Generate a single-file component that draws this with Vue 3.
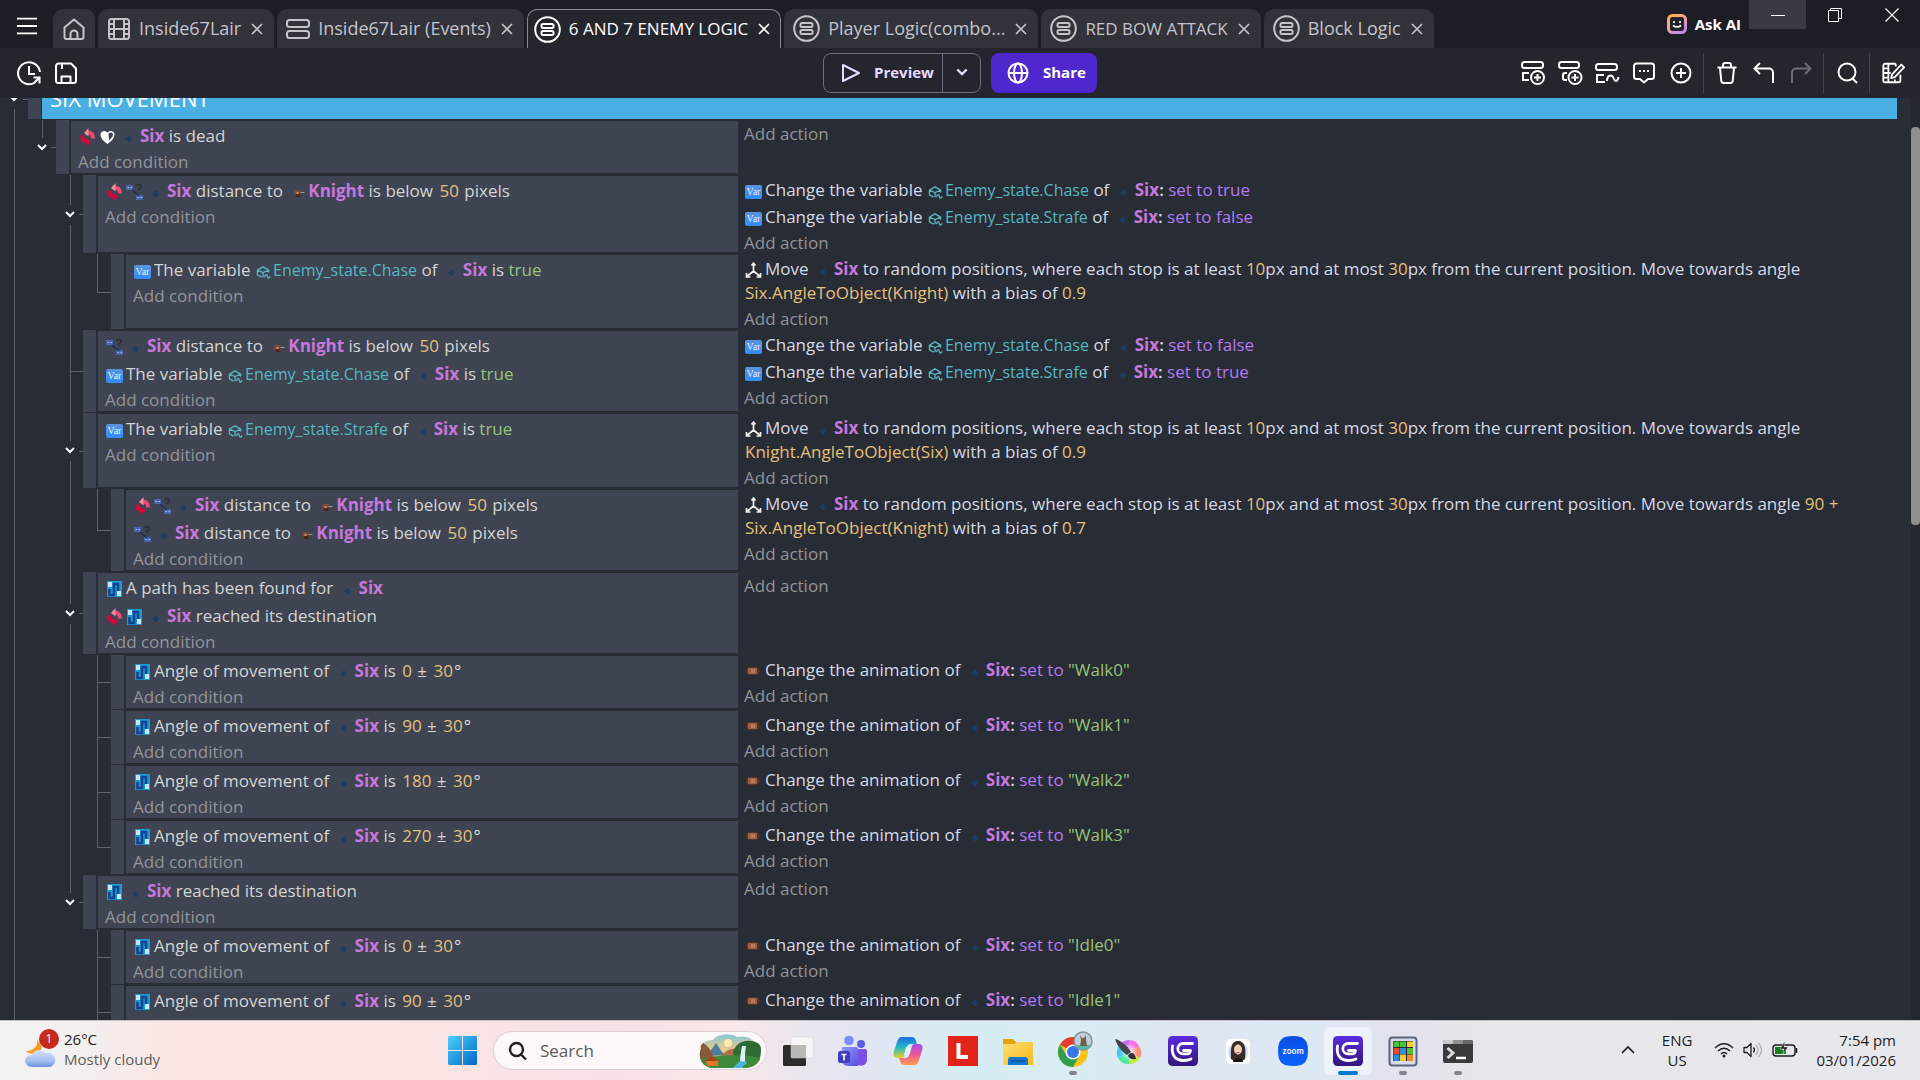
<script setup>
const text = (value) => ({ kind: 'text', value })
const num = (value) => ({ kind: 'num', value })
const bool = (value) => ({ kind: 'bool', value })
const oper = (value) => ({ kind: 'oper', value })
const icon = (name) => ({ kind: 'icon', name })
const variable = (value) => ({ kind: 'variable', value })
const six = { kind: 'object', name: 'six', value: 'Six' }
const knight = { kind: 'object', name: 'knight', value: 'Knight' }

const distance = (inverted) => [
  ...(inverted ? [icon('invert')] : []),
  icon('distance'), six, text(' distance to '), knight, text(' is below '), num('50'), text(' pixels'),
]
const variableIsTrue = (name) => [
  icon('var'), text('The variable '), variable(name), text(' of '), six, text(' is '), bool('true'),
]
const setVariable = (name, value) => [
  icon('var'), text('Change the variable '), variable(name), text(' of '), six,
  { kind: 'colon', value: ': ' }, oper('set to ' + value),
]
const move = (angle, bias) => [
  icon('move'), text('Move '), six, text(' to random positions, where each stop is at least '), num('10'),
  text('px and at most '), num('30'), text('px from the current position. Move towards angle '),
  ...angle.map(num), text(' with a bias of '), num(bias),
]
const angleIs = (angle) => [
  icon('path'), text('Angle of movement of '), six, text(' is '), num(angle), text(' ± '), num('30'), text('°'),
]
const animate = (name) => [
  icon('anim'), text('Change the animation of '), six, { kind: 'colon', value: ': ' },
  oper('set to '), { kind: 'str', value: `"${name}"` },
]

const events = [
  { guides: ['line', 'fold-end'], conditions: [[icon('invert'), icon('heart'), six, text(' is dead')]], actions: [] },
  {
    guides: ['line', '', 'fold'],
    conditions: [distance(true)],
    actions: [setVariable('Enemy_state.Chase', 'true'), setVariable('Enemy_state.Strafe', 'false')],
  },
  {
    guides: ['line', '', 'line', 'end'],
    conditions: [variableIsTrue('Enemy_state.Chase')],
    actions: [move(['Six.AngleToObject(Knight)'], '0.9')],
  },
  {
    guides: ['line', '', 'tee'],
    conditions: [distance(false), variableIsTrue('Enemy_state.Chase')],
    actions: [setVariable('Enemy_state.Chase', 'false'), setVariable('Enemy_state.Strafe', 'true')],
  },
  {
    guides: ['line', '', 'fold'],
    conditions: [variableIsTrue('Enemy_state.Strafe')],
    actions: [move(['Knight.AngleToObject(Six)'], '0.9')],
  },
  {
    guides: ['line', '', 'line', 'end'],
    conditions: [distance(true), distance(false)],
    actions: [move(['90 + ', 'Six.AngleToObject(Knight)'], '0.7')],
  },
  {
    guides: ['line', '', 'fold'],
    conditions: [
      [icon('path'), text('A path has been found for '), six],
      [icon('invert'), icon('path'), six, text(' reached its destination')],
    ],
    actions: [],
  },
  { guides: ['line', '', 'line', 'tee'], conditions: [angleIs('0')], actions: [animate('Walk0')] },
  { guides: ['line', '', 'line', 'tee'], conditions: [angleIs('90')], actions: [animate('Walk1')] },
  { guides: ['line', '', 'line', 'tee'], conditions: [angleIs('180')], actions: [animate('Walk2')] },
  { guides: ['line', '', 'line', 'end'], conditions: [angleIs('270')], actions: [animate('Walk3')] },
  {
    guides: ['line', '', 'fold-end'],
    conditions: [[icon('path'), six, text(' reached its destination')]],
    actions: [],
  },
  { guides: ['line', '', '', 'tee'], conditions: [angleIs('0')], actions: [animate('Idle0')] },
  { guides: ['line', '', '', 'tee'], conditions: [angleIs('90')], actions: [animate('Idle1')] },
]

const tabs = [
  { icon: 'film', label: 'Inside67Lair' },
  { icon: 'sheet', label: 'Inside67Lair (Events)' },
  { icon: 'external', label: '6 AND 7 ENEMY LOGIC', active: true, caps: true },
  { icon: 'external', label: 'Player Logic(combo...' },
  { icon: 'external', label: 'RED BOW ATTACK', caps: true },
  { icon: 'external', label: 'Block Logic' },
]

const tools = [
  [
    { id: 'add-event', label: 'Add an event' },
    { id: 'add-sub', label: 'Add a sub-event' },
    { id: 'add-other', label: 'Add another event' },
    { id: 'comment', label: 'Add a comment' },
    { id: 'plus', label: 'Choose and add an event' },
  ],
  [
    { id: 'trash', label: 'Delete' },
    { id: 'undo', label: 'Undo' },
    { id: 'redo', label: 'Redo', disabled: true },
  ],
  [{ id: 'search', label: 'Search in events' }],
  [{ id: 'edit-scene', label: 'Open settings' }],
]

const apps = [
  { id: 'taskview', label: 'Task view' },
  { id: 'teams', label: 'Teams' },
  { id: 'copilot', label: 'Copilot' },
  { id: 'lapp', label: 'L' },
  { id: 'folder', label: 'File Explorer' },
  { id: 'chrome', label: 'Chrome', running: true },
  { id: 'krita', label: 'Krita' },
  { id: 'gdevelop', label: 'GDevelop' },
  { id: 'avatar', label: 'Avatar' },
  { id: 'zoomapp', label: 'Zoom' },
  { id: 'gdevelop', label: 'GDevelop 5', active: true },
  { id: 'cube', label: 'Cube', running: true },
  { id: 'terminal', label: 'Terminal', running: true },
]
</script>

<template>
  <svg class="sprite" aria-hidden="true">
    <defs>
      <linearGradient id="g-win" x1="0" y1="0" x2="1" y2="1"><stop offset="0" stop-color="#4cd0ff" /><stop offset="1" stop-color="#0068c8" /></linearGradient>
      <linearGradient id="g-gd" x1="0" y1="0" x2="0" y2="1"><stop offset="0" stop-color="#5a2ce0" /><stop offset="1" stop-color="#34167c" /></linearGradient>
      <linearGradient id="g-ai" x1="0" y1="0" x2=".6" y2="1"><stop offset="0" stop-color="#ffb04a" /><stop offset=".5" stop-color="#f5a58c" /><stop offset="1" stop-color="#c08cf0" /></linearGradient>
      <linearGradient id="g-folder" x1="0" y1="0" x2="1" y2="1"><stop offset="0" stop-color="#ffdf70" /><stop offset="1" stop-color="#f9b91e" /></linearGradient>
      <linearGradient id="g-cloud" x1="0" y1="0" x2="0" y2="1"><stop offset="0" stop-color="#cfe0fb" /><stop offset=".6" stop-color="#a9c3f2" /><stop offset="1" stop-color="#6d93e0" /></linearGradient>
      <linearGradient id="g-zoom" x1="0" y1="0" x2="0" y2="1"><stop offset="0" stop-color="#0a4ee0" /><stop offset="1" stop-color="#0b63ff" /></linearGradient>
      <linearGradient id="g-teams" x1="0" y1="0" x2="1" y2="1"><stop offset="0" stop-color="#8f9cf8" /><stop offset="1" stop-color="#5a4ee0" /></linearGradient>
      <linearGradient id="g-cop1" x1="0" y1="0" x2="0" y2="1"><stop offset="0" stop-color="#1b6fe0" /><stop offset=".5" stop-color="#25b8c8" /><stop offset="1" stop-color="#e8d02a" /></linearGradient>
      <linearGradient id="g-cop2" x1="0" y1="0" x2="0" y2="1"><stop offset="0" stop-color="#a04ee8" /><stop offset=".5" stop-color="#ec5a9a" /><stop offset="1" stop-color="#ff9a4a" /></linearGradient>
      <linearGradient id="g-sky" x1="0" y1="0" x2="0" y2="1"><stop offset="0" stop-color="#7fc8d8" /><stop offset=".5" stop-color="#f6c98a" /><stop offset="1" stop-color="#3f7a30" /></linearGradient>
      <radialGradient id="g-center"><stop offset="0" stop-color="#fff" /><stop offset="1" stop-color="#fff" stop-opacity="0" /></radialGradient>
    </defs>

    <symbol id="menu" viewBox="0 0 24 24"><path d="M1 4h22M1 12h22M1 20h22" stroke="currentColor" stroke-width="2" /></symbol>
    <symbol id="home" viewBox="0 0 24 24"><path d="M2.500 10.500 12 2.500l9.500 8V20a2 2 0 0 1-2 2H4.500a2 2 0 0 1-2-2zM8.500 22v-5a3.500 3.500 0 0 1 7 0v5" fill="none" stroke="currentColor" stroke-width="2" stroke-linejoin="round" /></symbol>
    <symbol id="film" viewBox="0 0 24 24"><g fill="none" stroke="currentColor" stroke-width="2"><rect x="2" y="2" width="20" height="20" rx="2.500" /><path d="M7 2v20M17 2v20M7 12h10M2 7h5M2 12h5M2 17h5M17 7h5M17 12h5M17 17h5" /></g></symbol>
    <symbol id="sheet" viewBox="0 0 24 24"><g fill="none" stroke="currentColor" stroke-width="2"><rect x="1" y="3" width="22" height="7" rx="2.500" /><rect x="1" y="14" width="22" height="7" rx="2.500" /></g></symbol>
    <symbol id="external" viewBox="0 0 27 27"><g fill="none" stroke="currentColor" stroke-width="2"><circle cx="13.500" cy="13.500" r="12.300" /><rect x="7.500" y="8" width="12" height="4" rx="1.500" /><rect x="7.500" y="15" width="12" height="4" rx="1.500" /></g></symbol>
    <symbol id="close" viewBox="0 0 12 12"><path d="m1 1 10 10M11 1 1 11" stroke="currentColor" stroke-width="1.600" /></symbol>
    <symbol id="history" viewBox="0 0 26 26"><path d="M19 22.500A11 11 0 1 1 24 12M13 6v8h6M17.500 17.500h6v6M23.500 17.500l-5 5" fill="none" stroke="currentColor" stroke-width="2" /></symbol>
    <symbol id="save" viewBox="0 0 24 24"><path d="M4.500 2.500H17l5 5V19.500a2.500 2.500 0 0 1-2.500 2.500h-15A2.500 2.500 0 0 1 2 19.500V5a2.500 2.500 0 0 1 2.500-2.500zM8 3v5M7.500 22v-6.500h9V22" fill="none" stroke="currentColor" stroke-width="2" stroke-linejoin="round" /></symbol>
    <symbol id="play" viewBox="0 0 20 20"><path d="M2 2l16 8-16 8z" fill="none" stroke="currentColor" stroke-width="2" stroke-linejoin="round" /></symbol>
    <symbol id="chevron" viewBox="0 0 12 12"><path d="m2 3 4 4 4-4" fill="none" stroke="currentColor" stroke-width="2" /></symbol>
    <symbol id="globe" viewBox="0 0 22 22"><g fill="none" stroke="currentColor" stroke-width="2"><circle cx="11" cy="11" r="9.500" /><ellipse cx="11" cy="11" rx="4" ry="9.500" /><path d="M1.500 11h19" /></g></symbol>
    <symbol id="add-event" viewBox="0 0 26 26"><g fill="none" stroke="currentColor" stroke-width="2"><rect x="2" y="2" width="21" height="6" rx="2.500" /><path d="M9 13H3v7h6" /><circle cx="17.500" cy="17.500" r="6.500" /><path d="M17.500 14v7M14 17.500h7" /></g></symbol>
    <symbol id="add-sub" viewBox="0 0 26 26"><g fill="none" stroke="currentColor" stroke-width="2"><rect x="2" y="2" width="20" height="6" rx="2.500" /><path d="M10 13H8a2 2 0 0 0-2 2v3a2 2 0 0 0 2 2h2" /><circle cx="18" cy="17.500" r="6.500" /><path d="M18 14v7M14.500 17.500h7" /></g></symbol>
    <symbol id="add-other" viewBox="0 0 26 26"><g fill="none" stroke="currentColor" stroke-width="2"><rect x="2" y="4" width="21" height="6" rx="2.500" /><path d="M10 15H3v7h8M13 21c0-6 5-7 6.500-3s4 4 5-1" /></g></symbol>
    <symbol id="comment" viewBox="0 0 24 24"><path d="M4.500 2.500h15A2.500 2.500 0 0 1 22 5v10.500a2.500 2.500 0 0 1-2.500 2.500H16l-4 3.500L8 18H4.500A2.500 2.500 0 0 1 2 15.500V5a2.500 2.500 0 0 1 2.500-2.500z" fill="none" stroke="currentColor" stroke-width="2" stroke-linejoin="round" /><path d="M7 9h2v2H7zM11 9h2v2h-2zM15 9h2v2h-2z" fill="currentColor" /></symbol>
    <symbol id="plus" viewBox="0 0 24 24"><g fill="none" stroke="currentColor" stroke-width="2"><circle cx="12" cy="12" r="9.500" /><path d="M12 7v10M7 12h10" /></g></symbol>
    <symbol id="trash" viewBox="0 0 24 24"><path d="M2.500 6.500h19M8 6V4a2 2 0 0 1 2-2h4a2 2 0 0 1 2 2v2M5 7l1.300 13a2.500 2.500 0 0 0 2.500 2h6.400a2.500 2.500 0 0 0 2.500-2L19 7" fill="none" stroke="currentColor" stroke-width="2" /></symbol>
    <symbol id="undo" viewBox="0 0 24 24"><path d="M8 2 2.500 7.500 8 13M2.500 7.500H17a4 4 0 0 1 4 4V22" fill="none" stroke="currentColor" stroke-width="2" /></symbol>
    <symbol id="redo" viewBox="0 0 24 24"><path d="m16 2 5.500 5.500L16 13M21.500 7.500H7a4 4 0 0 0-4 4V22" fill="none" stroke="currentColor" stroke-width="2" /></symbol>
    <symbol id="search" viewBox="0 0 24 24"><path d="M20.500 11a8.500 8.500 0 1 1-17 0 8.500 8.500 0 0 1 17 0zM17.500 17.500 22 22" fill="none" stroke="currentColor" stroke-width="2" /></symbol>
    <symbol id="edit-scene" viewBox="0 0 26 26"><path d="M16 3H4.500A2 2 0 0 0 2.500 5v16a2 2 0 0 0 2 2H19a2 2 0 0 0 2-2v-6M8 3v20M2.500 8H8M2.500 13h8M2.500 18H8M15 23v-3M16 3v3M22 4l3 3L15 17.500l-4 1 1-4z" fill="none" stroke="currentColor" stroke-width="2" stroke-linejoin="round" /></symbol>
    <symbol id="ask" viewBox="0 0 20 20"><rect x="1.500" y="1.500" width="17" height="17" rx="4" fill="#23232c" stroke="url(#g-ai)" stroke-width="3" /><path d="M7 7v2M13 7v2M6 11.500q4 3 8 0" fill="none" stroke="#fff" stroke-width="1.600" /></symbol>
    <symbol id="minimize" viewBox="0 0 14 14"><path d="M0 7.500h14" stroke="currentColor" /></symbol>
    <symbol id="restore" viewBox="0 0 14 14"><path d="M.5 2.500h10v11H.5zM2.500 2.500v-2h11v10h-3" fill="none" stroke="currentColor" /></symbol>
    <symbol id="quit" viewBox="0 0 14 14"><path d="m.5.5 13 13M13.500.5l-13 13" stroke="currentColor" stroke-width="1.200" /></symbol>

    <symbol id="invert" viewBox="0 0 17 18"><path d="M8 4.500c4 0 6 1.500 6 6" fill="none" stroke="#ec4a70" stroke-width="4" /><path d="M9.500 0v8.500L5 5z" fill="#f58a9c" /><path d="M9 13.500c-4 0-6-1.500-6-6" fill="none" stroke="#cc0a3c" stroke-width="4" /><path d="M7.500 18V9.500L12 13.500z" fill="#d4063c" /></symbol>
    <symbol id="heart" viewBox="0 0 17 18"><path d="M8.500 16C3 12 1.500 9 1.500 6.500 1.500 3 6 1.500 8.500 4.500c2.500-3 7-1.500 7 2C15.500 9 14 12 8.500 16z" fill="#fff" /><path d="M9.500 5.500c2-2 4.500-1 4.500 1 0 2-2 4-4 6z" fill="#3e4451" /></symbol>
    <symbol id="distance" viewBox="0 0 17 18"><path d="M0 2h7v5H0zM10 12h7v5h-7z" fill="#4c66ac" /><path d="M1.500 4.500h1.500M4.500 4.500H6M11.500 14.500h1.500M14.500 14.500H16" stroke="#a9bbe8" /><path d="m6 7 7 6" stroke="#1c2f5e" stroke-width="1.500" /><path d="M10.500 3.500c1-3 4.500-2 4.500 0 0 2-2.500 1.500-2.500 4" fill="none" stroke="#2c303a" stroke-width="2" /></symbol>
    <symbol id="path" viewBox="0 0 17 18"><path d="M1 1h15v16H1z" fill="#1c9ad6" /><path d="M3.500 9v6H8V4h4v7" fill="none" stroke="#16418f" stroke-width="2.500" /><path d="M2 2h4v5H2zM11 11h4v5h-4z" fill="#bfe8fa" /></symbol>
    <symbol id="anim" viewBox="0 0 17 18"><path d="M1 9q0-3 3-4h7q3 1 4 4-1 3-4 4H4Q1 12 1 9z" fill="#5b3326" /><path d="M3 6h9v6H3z" fill="#9a5f45" /><path d="M6 7h4v4H6z" fill="#b87a5c" /></symbol>
    <symbol id="move" viewBox="0 0 17 18"><path d="M8.500 3v7M8.500 10l-6 5M8.500 10l6 5M6.500 4.500l2-2.500 2 2.500M1.500 12v4h4M15.500 12v4h-4" fill="none" stroke="#f2f2ee" stroke-width="1.700" /></symbol>
    <symbol id="six" viewBox="0 0 18 18"><path d="M8 8h3v6H8zM6 10h6v2H6z" fill="#1a3d66" /></symbol>
    <symbol id="knight" viewBox="0 0 18 18"><path d="M7 7h6v6H7z" fill="#7c4a34" /><path d="M8 11h5v3H8z" fill="#4b2620" /><path d="M9 9h2v2H9z" fill="#e08a50" /><path d="M13 9h4v1h-4z" fill="#9a9a9a" /></symbol>
    <symbol id="struct" viewBox="0 0 16 16"><path d="M13.500 8V5.500L7.500 2 1.500 5.500v5L6 13M1.500 5.500 7.500 8l6-2.500M7.500 8v5M9 13c1-4 3-3 3-1s2 3 3 0" fill="none" stroke="#56b6c2" stroke-width="1.400" /></symbol>

    <symbol id="windows" viewBox="0 0 29 29"><path d="M0 1.500C0 .7.700 0 1.500 0H14v14H0zM15 0h12.500c.8 0 1.500.7 1.500 1.500V14H15zM0 15h14v14H1.500C.7 29 0 28.300 0 27.500zM15 15h14v12.500c0 .8-.7 1.500-1.500 1.500H15z" fill="url(#g-win)" /></symbol>
    <symbol id="lens" viewBox="0 0 20 20"><path d="M15 8.500a6.500 6.500 0 1 1-13 0 6.500 6.500 0 0 1 13 0zM13 13.500l5 5" fill="none" stroke="#1d1d1d" stroke-width="2.400" /></symbol>
    <symbol id="landscape" viewBox="0 0 62 34">
      <clipPath id="c-land"><path d="M2 14C0 10 8 6 14 6 18 0 32-1 38 3c10-2 14 2 18 5 8 2 6 10 5 16-1 6-8 10-16 10H14C4 34-2 24 2 14z" /></clipPath>
      <g clip-path="url(#c-land)"><path d="M0 0h62v34H0z" fill="url(#g-sky)" /><circle cx="29" cy="9" r="4" fill="#ffe9a8" /><path d="M8 22 17 9l8 12z" fill="#4a7f9c" /><path d="M22 24c2-8 14-12 20-8v10z" fill="#b0714a" /><path d="M34 18c4-12 16-14 28-8v16H36z" fill="#2f6b34" /><path d="M0 6c6 4 12 8 14 16L0 28z" fill="#8a5a3c" /><path d="M0 26c16-6 44-6 62-2v10H0z" fill="#3f8a3a" /><path d="M43 12c-1 6-2 10-2 16l5 1c0-6 0-12 1-17z" fill="#d8f2f8" /><path d="M34 34c4-4 4-6 8-7l6 1c0 3-6 4-4 6z" fill="#49b6d8" /><path d="m7 27 6-4 6 4v5H8z" fill="#e0762c" /><path d="M5 27l8-5 7 5z" fill="#a8401c" /></g>
    </symbol>
    <symbol id="taskview" viewBox="0 0 32 32"><rect x="1" y="10" width="23" height="21" rx="1.500" fill="#2c2c2a" /><rect x="9" y="2" width="22" height="21" rx="1.500" fill="#f6f6f6" stroke="#d0d0d4" stroke-width=".5" /><path d="M9 10h15v13H9z" fill="#b9b9b7" /></symbol>
    <symbol id="teams" viewBox="0 0 32 32"><circle cx="12" cy="5.500" r="4.800" fill="#7d8cf2" /><circle cx="24" cy="9" r="4" fill="#5b60e0" /><path d="M17 14h11a2 2 0 0 1 2 2v9a6 6 0 0 1-9 5z" fill="#7a4fe8" /><path d="M5 12h14a2 2 0 0 1 2 2v17H12a7 7 0 0 1-8-7z" fill="url(#g-teams)" /><rect x="1" y="16" width="12" height="12" rx="2.500" fill="#3c3fc0" /><path d="M4.500 19.500h5M7 19.500v6" stroke="#fff" stroke-width="1.600" /></symbol>
    <symbol id="copilot" viewBox="0 0 32 32"><path d="M10 2h10c2 0 3 1 4 4l1 3h-6c-3 0-4 2-5 5l-2 7c-1 2-2 2-4 2H5c-4 0-4-4-3-7l3-9c1-3 2-5 5-5z" fill="url(#g-cop1)" /><path d="M22 30H12c-2 0-3-1-4-4l-1-3h6c3 0 4-2 5-5l2-7c1-2 2-2 4-2h3c4 0 4 4 3 7l-3 9c-1 3-2 5-5 5z" fill="url(#g-cop2)" /><path d="M14 12h5l-2 8h-5z" fill="#e8f2f6" /></symbol>
    <symbol id="lapp" viewBox="0 0 32 32"><path d="M1 1h30v30H1z" fill="#e2231a" /><path d="M11.500 8v14H21" fill="none" stroke="#fff" stroke-width="4" /></symbol>
    <symbol id="folder" viewBox="0 0 32 32"><path d="M1 4h10l3 3h17v8H1z" fill="#e3a20c" /><path d="M1 9h11l3-2h16v22a1 1 0 0 1-1 1H2a1 1 0 0 1-1-1z" fill="url(#g-folder)" /><path d="M6 30v-5a3 3 0 0 1 3-3h14a3 3 0 0 1 3 3v5z" fill="#1478d0" /><path d="M9 26h14" stroke="#0b4d96" stroke-width="1.500" /></symbol>
    <symbol id="chrome" viewBox="0 0 40 40"><circle cx="20" cy="21" r="15" fill="#fcc31e" /><path d="M20 21 7 13.500A15 15 0 0 1 33 13.500H20z" fill="#e33b2e" /><path d="M7 13.500A15 15 0 0 0 20 36l6.500-11.500L20 21l-6.500 3.500z" fill="#2f9e4f" /><circle cx="20" cy="21" r="7.500" fill="#fff" /><circle cx="20" cy="21" r="6" fill="#3478ea" /><circle cx="30" cy="10" r="9" fill="#c3cdd6" stroke="#84939c" stroke-width="1.500" /><path d="M22.500 14a8.500 8.500 0 0 0 15 0z" fill="#5bb8a8" /><path d="M27 4l2 3h2l2-3v5l1 6h-7l1-6z" fill="#6f6052" /></symbol>
    <symbol id="krita" viewBox="0 0 32 32">
      <path d="M17 17V5a12 12 0 0 1 10 6z" fill="#ff6ae0" /><path d="M17 17l10-6a12 12 0 0 1 1 12z" fill="#ff8f7a" /><path d="M17 17l11 6a12 12 0 0 1-11 6z" fill="#c4e84a" /><path d="M17 17v12a12 12 0 0 1-11-6z" fill="#4ae89a" /><path d="M17 17 6 23a12 12 0 0 1 1-12z" fill="#42c6f4" /><path d="M17 17 7 11a12 12 0 0 1 10-6z" fill="#c46cf8" />
      <circle cx="17" cy="17" r="9" fill="url(#g-center)" /><path d="M3 4c5 1 13 7 16 13l-4 3C9 16 5 10 3 4z" fill="#46464a" /><path d="M17 19c3-2 6-1 7 5-4 1-7-1-8-3z" fill="#2e2e32" />
    </symbol>
    <symbol id="gdevelop" viewBox="0 0 32 32"><rect x="1" y="1" width="30" height="30" rx="4.500" fill="url(#g-gd)" /><path d="M25.500 8.500H16a5.200 5.200 0 0 0 0 10.400h4.500c2 0 2.500-.9 3-3.400H16.500M5.500 11c-1.500 9 3 14.500 11 14.500 3 0 5.500-.5 7.500-1.500" fill="none" stroke="#fff" stroke-width="2.800" stroke-linecap="round" stroke-linejoin="round" /></symbol>
    <symbol id="avatar" viewBox="0 0 32 32"><rect x="4" y="4" width="24" height="25" rx="5" fill="#fff" /><circle cx="16" cy="17" r="10" fill="#c9def5" /><path d="M9 24c0-8-1-18 7-18s8 10 7 18l-3 2h-8z" fill="#3b2a26" /><ellipse cx="16" cy="14.500" rx="4" ry="5" fill="#f2cdb8" /><path d="M11 27c0-5 10-5 10 0z" fill="#16161a" /><path d="M14.500 17.500h3" stroke="#c0424a" /></symbol>
    <symbol id="zoomapp" viewBox="0 0 32 32"><path d="M16 1c11 0 15 4 15 15s-4 15-15 15S1 27 1 16 5 1 16 1z" fill="url(#g-zoom)" /></symbol>
    <symbol id="cube" viewBox="0 0 32 32"><rect x="2.500" y="2.500" width="27" height="28" rx="3" fill="#d6dbe8" stroke="#5b6478" stroke-width="2" /><path d="M6 6h20v20H6z" fill="#2c2a30" /><path d="M6.500 6.500h6V12h-6zM13 6.500h6V12h-6zM20 13h6v6h-6z" fill="#46c33a" /><path d="M20 6.500h6V12h-6zM13 19.500h6V26h-6z" fill="#f6c935" /><path d="M6.500 13h6v6h-6z" fill="#ef4a24" /><path d="M13 13h6v6h-6zM6.500 19.500h6V26h-6z" fill="#2f8de4" /><path d="M20 19.500h6V26h-6z" fill="#f08a28" /></symbol>
    <symbol id="terminal" viewBox="0 0 32 32"><rect x="1" y="5" width="30" height="23" rx="2" fill="#3a3a3a" /><path d="M1 9V7a2 2 0 0 1 2-2h8v4z" fill="#c9c9c9" /><path d="M11 5h10v4H11z" fill="#8f8f8f" /><path d="M21 5h8a2 2 0 0 1 2 2v2H21z" fill="#666" /><path d="m5.500 13 5.500 5-5.500 5" fill="none" stroke="#ddd" stroke-width="3" /><path d="M14 23h10" stroke="#fff" stroke-width="2.500" /></symbol>
    <symbol id="weather" viewBox="0 0 36 36"><path d="M15 8c2 6-3 12-11 12 4 5 14 3 16-4z" fill="#f2a01c" /><path d="M10 36a7 6 0 0 1 0-12 8 7 0 0 1 14-2 7 7 0 0 1 4 14z" fill="url(#g-cloud)" /></symbol>
    <symbol id="up" viewBox="0 0 16 16"><path d="m2 11 6-6 6 6" fill="none" stroke="#1d1d1d" stroke-width="1.700" /></symbol>
    <symbol id="wifi" viewBox="0 0 20 20"><path d="M1 8q9-8.500 18 0M4 11q6-5.500 12 0M7 14q3-3 6 0" fill="none" stroke="#1d1d1d" stroke-width="1.400" /><circle cx="10" cy="16" r="1.500" fill="#1d1d1d" /></symbol>
    <symbol id="sound" viewBox="0 0 20 20"><path d="M1 7.500h3l4-4v13l-4-4H1z" fill="none" stroke="#1d1d1d" stroke-width="1.300" stroke-linejoin="round" /><path d="M10.500 7.500q2 2.500 0 5" fill="none" stroke="#1d1d1d" stroke-width="1.300" /><path d="M13 5q4 5 0 10M15.500 3q6 7 0 14" fill="none" stroke="#b4b4b8" stroke-width="1.300" /></symbol>
    <symbol id="battery" viewBox="0 0 26 20"><rect x="1" y="5" width="22" height="11" rx="3" fill="none" stroke="#1d1d1d" stroke-width="1.400" /><path d="M3 7h8l-1 3h4v4H3z" fill="#12801c" /><path d="m13 1-5 8h4l-1 5 5-7h-4z" fill="#1d1d1d" stroke="#e9eaec" stroke-width=".5" /><path d="M24.500 8v5" stroke="#1d1d1d" stroke-width="1.600" /></symbol>
  </svg>

  <div class="screen">
    <header class="titlebar">
      <button class="menu" aria-label="Main menu"><svg class="i22"><use href="#menu" /></svg></button>
      <nav class="tabs">
        <button class="tab home" aria-label="Home"><svg class="i24"><use href="#home" /></svg></button>
        <div v-for="tab in tabs" :key="tab.label" class="tab" :class="{ active: tab.active, caps: tab.caps }">
          <button class="tab-label">
            <svg :class="tab.icon === 'external' ? 'i27' : 'i24'"><use :href="'#' + tab.icon" /></svg>
            <span>{{ tab.label }}</span>
          </button>
          <button class="tab-close" aria-label="Close tab"><svg class="i12"><use href="#close" /></svg></button>
        </div>
      </nav>
      <button class="ask"><svg class="i20"><use href="#ask" /></svg><span>Ask AI</span></button>
      <div class="window-controls">
        <button class="lit" aria-label="Minimize"><svg class="i14"><use href="#minimize" /></svg></button>
        <button aria-label="Restore"><svg class="i14"><use href="#restore" /></svg></button>
        <button aria-label="Close"><svg class="i14"><use href="#quit" /></svg></button>
      </div>
    </header>

    <div class="toolbar">
      <div class="tools-left">
        <button aria-label="History"><svg class="i26"><use href="#history" /></svg></button>
        <button aria-label="Save"><svg class="i24"><use href="#save" /></svg></button>
      </div>
      <div class="tools-center">
        <div class="preview">
          <button class="preview-main"><svg class="i20"><use href="#play" /></svg><span>Preview</span></button>
          <button class="preview-more" aria-label="Preview options"><svg class="i14"><use href="#chevron" /></svg></button>
        </div>
        <button class="share"><svg class="i22"><use href="#globe" /></svg><span>Share</span></button>
      </div>
      <div class="tools-right">
        <div v-for="(group, g) in tools" :key="g" class="tool-group">
          <button v-for="tool in group" :key="tool.id" :aria-label="tool.label" :disabled="tool.disabled">
            <svg :class="tool.id.startsWith('add') ? 'i26' : 'i24'"><use :href="'#' + tool.id" /></svg>
          </button>
        </div>
      </div>
    </div>

    <main class="canvas">
      <div class="sheet">
        <div class="group-row">
          <span class="guide fold"><button class="fold-btn" aria-label="Fold"><svg class="i12"><use href="#chevron" /></svg></button></span>
          <span class="handle"></span>
          <h2 class="group-title">SIX MOVEMENT</h2>
        </div>
        <div v-for="(event, e) in events" :key="e" class="event">
          <div class="left">
            <span v-for="(guide, i) in event.guides" :key="i" class="guide" :class="guide">
              <button v-if="guide.startsWith('fold')" class="fold-btn" aria-label="Fold">
                <svg class="i12"><use href="#chevron" /></svg>
              </button>
            </span>
            <span class="handle"></span>
            <div class="conditions">
              <p v-for="(line, l) in event.conditions" :key="l" class="sentence">
                <template v-for="(seg, s) in line" :key="s">
                  <span v-if="seg.name === 'var'" class="var-icon" aria-hidden="true">Var</span>
                  <svg v-else-if="seg.kind === 'icon'" class="type-icon"><use :href="'#' + seg.name" /></svg>
                  <svg v-else-if="seg.kind === 'object'" class="obj-icon"><use :href="'#' + seg.name" /></svg>
                  <svg v-else-if="seg.kind === 'variable'" class="struct-icon"><use href="#struct" /></svg>
                  <span v-if="seg.value" :class="seg.kind">{{ seg.value }}</span>
                </template>
              </p>
              <button class="add">Add condition</button>
            </div>
          </div>
          <div class="actions">
            <p v-for="(line, l) in event.actions" :key="l" class="sentence">
              <template v-for="(seg, s) in line" :key="s">
                <span v-if="seg.name === 'var'" class="var-icon" aria-hidden="true">Var</span>
                <svg v-else-if="seg.kind === 'icon'" class="type-icon"><use :href="'#' + seg.name" /></svg>
                <svg v-else-if="seg.kind === 'object'" class="obj-icon"><use :href="'#' + seg.name" /></svg>
                <svg v-else-if="seg.kind === 'variable'" class="struct-icon"><use href="#struct" /></svg>
                <span v-if="seg.value" :class="seg.kind">{{ seg.value }}</span>
              </template>
            </p>
            <button class="add">Add action</button>
          </div>
        </div>
      </div>
      <div class="scrollbar"><div class="thumb"></div></div>
    </main>

    <footer class="taskbar">
      <button class="weather">
        <span class="weather-icon"><svg class="i36"><use href="#weather" /></svg><b class="badge">1</b></span>
        <span class="weather-text"><span>26°C</span><span class="muted">Mostly cloudy</span></span>
      </button>
      <div class="dock">
        <button class="app" aria-label="Start"><svg class="i29"><use href="#windows" /></svg></button>
        <label class="search">
          <svg class="i20"><use href="#lens" /></svg>
          <input type="text" placeholder="Search" aria-label="Search" />
          <svg class="art"><use href="#landscape" /></svg>
        </label>
        <button v-for="app in apps" :key="app.label" class="app" :class="{ active: app.active, running: app.running }" :aria-label="app.label">
          <svg :class="app.id === 'chrome' ? 'i40' : 'i32'"><use :href="'#' + app.id" /></svg>
          <span v-if="app.id === 'zoomapp'" class="wordmark">zoom</span>
        </button>
      </div>
      <div class="tray">
        <button aria-label="Show hidden icons"><svg class="i16"><use href="#up" /></svg></button>
        <button class="lang"><span>ENG</span><span>US</span></button>
        <button class="status" aria-label="Network, volume and battery">
          <svg class="i20"><use href="#wifi" /></svg>
          <svg class="i20"><use href="#sound" /></svg>
          <svg class="bat"><use href="#battery" /></svg>
        </button>
        <button class="clock"><span>7:54 pm</span><span>03/01/2026</span></button>
      </div>
    </footer>
  </div>
</template>

<style>
body { margin: 0; background: #282c34; }
</style>

<style scoped>
* { box-sizing: border-box; }
.sprite { position: absolute; width: 0; height: 0; }
button { font: inherit; color: inherit; background: none; border: 0; padding: 0; margin: 0; }
svg { display: block; flex: none; }
.i12 { width: 12px; height: 12px; }
.i14 { width: 14px; height: 14px; }
.i16 { width: 16px; height: 16px; }
.i20 { width: 20px; height: 20px; }
.i22 { width: 22px; height: 22px; }
.i24 { width: 24px; height: 24px; }
.i26 { width: 26px; height: 26px; }
.i27 { width: 27px; height: 27px; }
.i29 { width: 29px; height: 29px; }
.i32 { width: 32px; height: 32px; }
.i36 { width: 36px; height: 36px; }
.i40 { width: 40px; height: 40px; }

.screen {
  height: 100vh; display: flex; flex-direction: column; overflow: hidden;
  font-family: "Open Sans", "Noto Sans", sans-serif; font-size: 17px; color: #fff; background: #282c34;
}

.titlebar { flex: none; height: 48px; display: flex; align-items: flex-start; background: #1d1d26; }
.menu { width: 53px; height: 48px; padding: 4px 0 0 16px; }
.tabs { display: flex; gap: 3px; padding-top: 9px; flex: 1; min-width: 0; }
.tab {
  height: 39px; display: flex; align-items: center; padding: 0 11px 0 9px; white-space: nowrap; font-size: 18px;
  border-radius: 10px 10px 0 0; background: #32323b; color: #c4c4ca;
}
.tab.caps { font-size: 17px; }
.tab.home { width: 42px; padding: 0; justify-content: center; }
.tab.active { background: #25252e; color: #fff; border: 1px solid #8a8a92; border-bottom: 0; padding: 0 10px 0 6px; }
.tab-label { display: flex; align-items: center; gap: 8px; }
.tab-label span { padding-bottom: 1px; }
.tab-close { padding: 0 0 0 10px; }
.ask { display: flex; align-items: center; gap: 8px; height: 48px; padding-right: 8px; font-size: 15px; font-weight: 700; }
.window-controls { display: flex; }
.window-controls button { width: 57px; height: 29px; display: grid; place-items: center; }
.window-controls .lit { background: #3a3a44; }

.toolbar {
  flex: none; height: 50px; display: grid; grid-template-columns: 1fr auto 1fr; align-items: center;
  background: #25252e;
}
.tools-left { display: flex; align-items: center; gap: 12px; padding-left: 16px; }
.tools-center { display: flex; gap: 10px; height: 40px; font-size: 15px; font-weight: 700; }
.tools-center span { padding-bottom: 3px; }
.preview { display: flex; width: 158px; border: 1px solid #6d6d80; border-radius: 8px; color: #e6dcff; }
.preview-main { flex: 1; display: flex; align-items: center; gap: 13px; padding-left: 17px; }
.preview-more { width: 38px; display: grid; place-items: center; border-left: 1px solid #6d6d80; }
.share { width: 106px; display: flex; align-items: center; gap: 14px; padding-left: 16px; border-radius: 8px; background: #4f28cd; }
.tools-right { display: flex; justify-content: flex-end; padding-right: 5px; }
.tool-group { display: flex; align-items: center; height: 40px; padding: 0 4px; }
.tool-group + .tool-group { border-left: 1px solid #44444f; }
.tool-group button { width: 37px; display: grid; place-items: center; }
.tool-group button:disabled { color: #6c6c74; }

.canvas { position: relative; flex: 1; min-height: 0; overflow: hidden; background: #282c34; }
.sheet { margin-top: -20px; padding-right: 23px; }
.group-row { display: flex; height: 42px; }
.group-title {
  flex: 1; margin: 1px 0; padding-left: 8px; font-size: 22px; font-weight: 400; line-height: 38px;
  background: #4ab0e4;
}
.event { display: grid; grid-template-columns: minmax(0, 738fr) minmax(0, 1159fr); }
.left { display: flex; }
.handle { flex: none; width: 13px; margin: 0 2px 1px 0; background: #3e4451; }
.group-row .handle { margin-right: 1px; }
.conditions { flex: 1; min-width: 0; margin: 1px 0 2px; padding: 2px 0 0 8px; background: #3e4451; color: #d4d4d4; }
.actions { padding: 2px 0 0 6px; color: #d5d9e6; }
.sentence { margin: 0; padding: 1px 0 3px; line-height: 24px; }
.actions .sentence { padding: 1px 0 2px 1px; }
.sentence svg { display: inline-block; vertical-align: -4px; }
.type-icon { width: 17px; height: 18px; margin-right: 3px; }
.var-icon {
  display: inline-block; width: 17px; height: 14px; margin-right: 3px; border-radius: 2px; vertical-align: 1px;
  background: linear-gradient(#5b93dc, #2f8dff); color: #e4f0ff;
  font: 10px/14px "Liberation Serif", serif; text-align: center;
}
.obj-icon { width: 19px; height: 18px; margin-right: 2px; }
.struct-icon { width: 15px; height: 15px; margin: 0 2px 0 1px; }
.object { color: #c678dd; font-weight: 700; }
.variable { color: #56b6c2; font-size: 16px; }
.num { color: #e5c07b; }
.conditions .num { margin: 0 1px 0 2px; }
.bool, .str { color: #98c379; }
.oper { color: #b678f5; }
.colon { font-weight: 600; }
.add { display: block; height: 22px; line-height: 22px; margin-left: -1px; color: #929499; }
.actions .add { height: 23px; line-height: 23px; margin-left: 0; }

.guide {
  flex: none; width: 28px; display: flex; align-items: center; padding-left: 4px; background-repeat: no-repeat;
  --ink: linear-gradient(#5c616c, #5c616c);
}
.guide:nth-child(3) { width: 27px; }
.guide.line { background-image: var(--ink); background-size: 1px 100%; background-position: 14px 0; }
.guide.tee, .guide.fold { background-image: var(--ink), var(--ink); background-size: 1px 100%, 14px 1px; background-position: 14px 0, 14px 50%; }
.guide.end, .guide.fold-end { background-image: var(--ink), var(--ink); background-size: 1px 50%, 14px 1px; background-position: 14px 0, 14px 50%; }
.fold-btn { width: 19px; height: 20px; display: grid; place-items: center; background: #282c34; }

.scrollbar { position: absolute; top: 0; right: 0; bottom: 0; width: 9px; background: #24272e; }
.thumb { height: 398px; margin-top: 29px; border-radius: 4px; background: #8f8f8f; }

.taskbar {
  flex: none; height: 60px; display: grid; grid-template-columns: 1fr auto 1fr; align-items: center;
  border-top: 1px solid #c8c0c4; color: #1d1d1d; font-size: 15px; line-height: 20px;
  background: linear-gradient(90deg, #f2f2f2 0, #f3f0ef 4%, #fae6e4 9%, #fae6e4 20%, #f6e1e5 32%, #f9e7e6 38%, #e8e6ef 42%, #e2e6f2 45%, #d6ecf3 50%, #d8ecf4 56%, #dfe5f1 62%, #dce9f4 68%, #e3e3ef 73%, #e8e7e9 78%, #e7e8ec 100%);
}
.weather { display: flex; align-items: center; justify-self: start; gap: 6px; padding: 0 0 4px 22px; text-align: left; }
.weather-icon { position: relative; }
.badge {
  position: absolute; top: -2px; right: -1px; width: 20px; height: 20px; border-radius: 10px;
  background: #c42b1c; color: #fff; font-size: 12px; font-weight: 400; text-align: center;
}
.weather-text { display: flex; flex-direction: column; }
.muted { color: #5e5c5c; }
.dock { display: flex; align-items: center; gap: 7px; }
.app { position: relative; width: 48px; height: 48px; display: grid; place-items: center; border-radius: 5px; }
.app.active { background: #eef2fa; box-shadow: 0 0 0 1px #dfe4ee; }
.app.active::after, .app.running::after {
  content: ""; position: absolute; left: 20px; bottom: 0; width: 8px; height: 4px; border-radius: 2px; background: #85868c;
}
.app.active::after { left: 14px; width: 20px; background: #0078d4; }
.wordmark { position: absolute; left: 0; right: 0; top: 14px; font: 600 8px/20px Inter, sans-serif; text-align: center; color: #fff; }
.search {
  width: 274px; height: 39px; display: flex; align-items: center; gap: 12px; padding: 0 5px 0 14px;
  border: 1px solid #dccfd3; border-radius: 20px; background: #fcf8f8;
}
.search input { flex: 1; min-width: 0; border: 0; padding: 0; background: none; font: inherit; font-size: 17px; outline: 0; }
.search input::placeholder { color: #5c5a5a; opacity: 1; }
.art { width: 62px; height: 34px; }
.tray { display: flex; align-items: center; justify-self: end; padding: 0 24px 2px 0; }
.lang { display: flex; flex-direction: column; align-items: center; margin-left: 26px; }
.status { display: flex; align-items: center; gap: 9px; margin-left: 22px; }
.bat { width: 26px; height: 20px; }
.clock { display: flex; flex-direction: column; align-items: flex-end; margin-left: 18px; }
</style>
